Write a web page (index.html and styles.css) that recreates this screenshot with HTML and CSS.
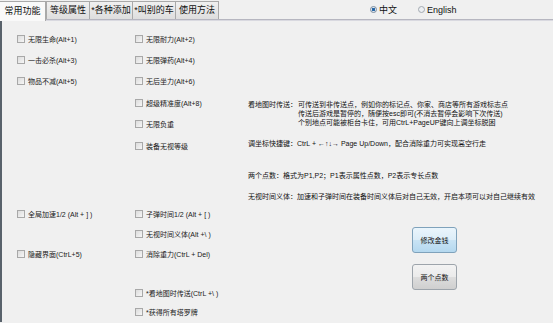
FILE: index.html
```html
<!DOCTYPE html>
<html lang="zh-CN">
<head>
  <meta charset="UTF-8">
  <meta name="viewport" content="width=device-width, initial-scale=1.0">
  <title>修改器</title>
  <link rel="stylesheet" href="styles.css">
</head>
<body>
  <div class="topbar">
    <div class="tabs">
      <div class="tab selected">常用功能</div>
      <div class="tab">等级属性</div>
      <div class="tab">*各种添加</div>
      <div class="tab">*叫别的车</div>
      <div class="tab">使用方法</div>
    </div>
    <div class="lang">
      <label class="radio"><span class="dot checked"></span>中文</label>
      <label class="radio"><span class="dot"></span>English</label>
    </div>
  </div>

  <div class="panel">
    <div class="checks">
      <div class="check"><span class="box"></span>无限生命(Alt+1)</div>
      <div class="check"><span class="box"></span>无限耐力(Alt+2)</div>

      <div class="check"><span class="box"></span>一击必杀(Alt+3)</div>
      <div class="check"><span class="box"></span>无限弹药(Alt+4)</div>

      <div class="check"><span class="box"></span>物品不减(Alt+5)</div>
      <div class="check"><span class="box"></span>无后坐力(Alt+6)</div>

      <div></div>
      <div class="check"><span class="box"></span>超级精准度(Alt+8)</div>

      <div></div>
      <div class="check"><span class="box"></span>无限负重</div>

      <div></div>
      <div class="check"><span class="box"></span>装备无视等级</div>

      <div class="gap"></div>

      <div class="check"><span class="box"></span>全局加速1/2 (Alt + ] )</div>
      <div class="check"><span class="box"></span>子弹时间1/2 (Alt + [ )</div>

      <div></div>
      <div class="check"><span class="box"></span>无视时间义体(Alt +\ )</div>

      <div class="check"><span class="box"></span>隐藏界面(CtrL+5)</div>
      <div class="check"><span class="box"></span>消除重力(CtrL + Del)</div>

      <div class="gap"></div>

      <div></div>
      <div class="check"><span class="box"></span>*看地图时传送(CtrL +\ )</div>

      <div></div>
      <div class="check"><span class="box"></span>*获得所有塔罗牌</div>
    </div>

    <div class="info">
      <div class="note">
        <span class="note-label">看地图时传送：</span>
        <div>
          <div>可传送到非传送点，例如你的标记点、你家、商店等所有游戏标志点</div>
          <div>传送后游戏是暂停的，随便按esc即可(不消去暂停会影响下次传送)</div>
          <div>个别地点可能被柜台卡住，可用CtrL+PageUP键向上调坐标脱困</div>
        </div>
      </div>
      <div class="note">调坐标快捷键：CtrL + ←↑↓→ Page Up/Down，配合消除重力可实现高空行走</div>
      <div class="note wide">两个点数：格式为P1,P2；P1表示属性点数，P2表示专长点数</div>
      <div class="note">无视时间义体：加速和子弹时间在装备时间义体后对自己无效，开启本项可以对自己继续有效</div>

      <div class="actions">
        <button class="btn active">修改金钱</button>
        <button class="btn">两个点数</button>
      </div>
    </div>
  </div>
</body>
</html>
```

FILE: styles.css
```css
body {
  margin: 0;
  width: 553px;
  height: 323px;
  overflow: hidden;
  background-color: #f0f0f0;
  font-family: "Liberation Sans", "Noto Sans CJK SC", sans-serif;
  color: #111;
}

.topbar {
  display: flex;
  height: 19px;
  border-bottom: 1px solid #b6b6c0;
  box-shadow: 0 1px 0 #d9d9e0;
}

.tabs {
  display: flex;
  align-items: flex-end;
}

.tab {
  width: 42px;
  height: 17px;
  margin-left: -1px;
  border: 1px solid #a9a9a9;
  border-bottom: none;
  background: linear-gradient(#f0f0f0, #dedede);
  font-size: 9px;
  line-height: 17px;
  text-align: center;
  white-space: nowrap;
  color: #111;
}

.tab.selected {
  width: 45px;
  height: 19px;
  margin-left: 0;
  margin-right: 1px;
  margin-bottom: -2px;
  border-left: none;
  background: #f9f9f9;
  line-height: 18px;
  position: relative;
}

.lang {
  display: flex;
  align-items: center;
  margin-left: 151px;
  gap: 21px;
  font-size: 9px;
}

.radio {
  display: flex;
  align-items: center;
  gap: 2px;
}

.dot {
  width: 5px;
  height: 5px;
  border: 1px solid #a2a9b0;
  border-radius: 50%;
  background: #eceff2;
}

.dot.checked {
  border-color: #7b8d9e;
  background: radial-gradient(circle, #1f5f9e 0, #2c6bab 40%, #dfe6ee 55%);
}

.panel {
  display: flex;
  height: 302px;
  border-left: 2px solid #59626b;
}

.checks {
  display: grid;
  grid-template-columns: 118px 113px;
  grid-template-rows: repeat(6, 21.4px) 48px repeat(3, 20px) 19px repeat(2, 19px);
  padding: 8px 0 0 15px;
  align-content: start;
}

.gap {
  grid-column: 1 / -1;
}

.check {
  display: flex;
  align-items: center;
  gap: 3px;
  font-size: 7px;
  white-space: nowrap;
  color: #1a1a1a;
}

.box {
  flex: none;
  width: 6px;
  height: 6px;
  border: 1px solid #a8a8a8;
  background: linear-gradient(135deg, #dcdcdc, #f6f6f6);
}

.info {
  padding-top: 80px;
  font-size: 7px;
  line-height: 9px;
  white-space: nowrap;
  color: #111;
}

.note {
  display: flex;
  margin-top: 12px;
}

.note:first-child {
  margin-top: 0;
}

.note.wide {
  margin-top: 23px;
}

.note-label {
  width: 50px;
}

.actions {
  display: flex;
  flex-direction: column;
  gap: 11px;
  margin: 26px 0 0 164px;
}

.btn {
  width: 45px;
  height: 26px;
  padding: 0;
  border: 1px solid #9da4ab;
  border-radius: 3px;
  background: linear-gradient(#f3f3f3 0%, #ebebeb 48%, #dddddd 52%, #cfcfcf 100%);
  font-family: "Liberation Sans", "Noto Sans CJK SC", sans-serif;
  font-size: 7px;
  color: #111;
}

.btn.active {
  border-color: #7fa2bb;
  background: linear-gradient(#eaf5fc 0%, #dcedf8 48%, #c8e3f4 52%, #b4d8ef 100%);
}
```
